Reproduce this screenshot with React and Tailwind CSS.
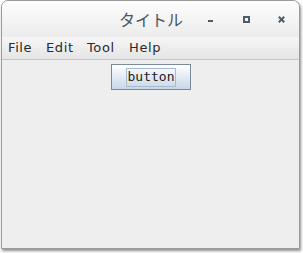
export default function App() {
  return (
    <div className="w-[303px] h-[253px] bg-white" style={{ fontFamily: '"DejaVu Sans", sans-serif' }}>
      <div className="ml-px w-[299px] h-[249px] flex flex-col rounded-t-[7px] border border-[#9a9a9a] bg-[#eeeeee] shadow-[1px_2px_3px_rgba(0,0,0,0.45)] overflow-hidden">
        {/* title bar */}
        <div className="h-[36px] shrink-0 flex items-center bg-gradient-to-b from-[#fdfdfd] to-[#ececec]">
          <div
            className="ml-[117px] w-[64px] text-[16px] leading-none text-[#4a5863]"
            style={{ fontFamily: '"Noto Sans CJK JP", sans-serif' }}
          >
            タイトル
          </div>
          <div className="ml-[25px] w-[5px] h-[2px] mt-[4px] bg-[#4e5c66]" />
          <div className="ml-[30px] w-[7px] h-[7px] border-2 border-[#4e5c66]" />
          <svg className="ml-[28px]" width="7" height="7" viewBox="0 0 7 7">
            <path d="M0.8 0.8 L6.2 6.2 M6.2 0.8 L0.8 6.2" stroke="#4e5c66" strokeWidth="2" />
          </svg>
        </div>
        {/* menu bar */}
        <div className="h-[23px] shrink-0 flex items-center pl-[6px] text-[13px] tracking-[0.6px] text-[#2a2a2a] bg-gradient-to-b from-[#f6f6f6] to-[#e5e5e5] border-b border-[#c6c6c6]">
          <span className="w-[38px]">File</span>
          <span className="w-[41px]">Edit</span>
          <span className="w-[42px]">Tool</span>
          <span>Help</span>
        </div>
        {/* content */}
        <div className="flex-1 flex justify-center pt-[4px]">
          <div className="ml-px w-[80px] h-[26px] flex items-center justify-center border border-[#7a8a99] bg-gradient-to-b from-[#ffffff] to-[#c8d7e8]">
            <div
              className="px-[1px] h-[19px] flex items-center border border-[#a9bccf] text-[13px] text-[#222222]"
              style={{ fontFamily: '"DejaVu Sans Mono", monospace' }}
            >
              button
            </div>
          </div>
        </div>
      </div>
    </div>
  );
}
